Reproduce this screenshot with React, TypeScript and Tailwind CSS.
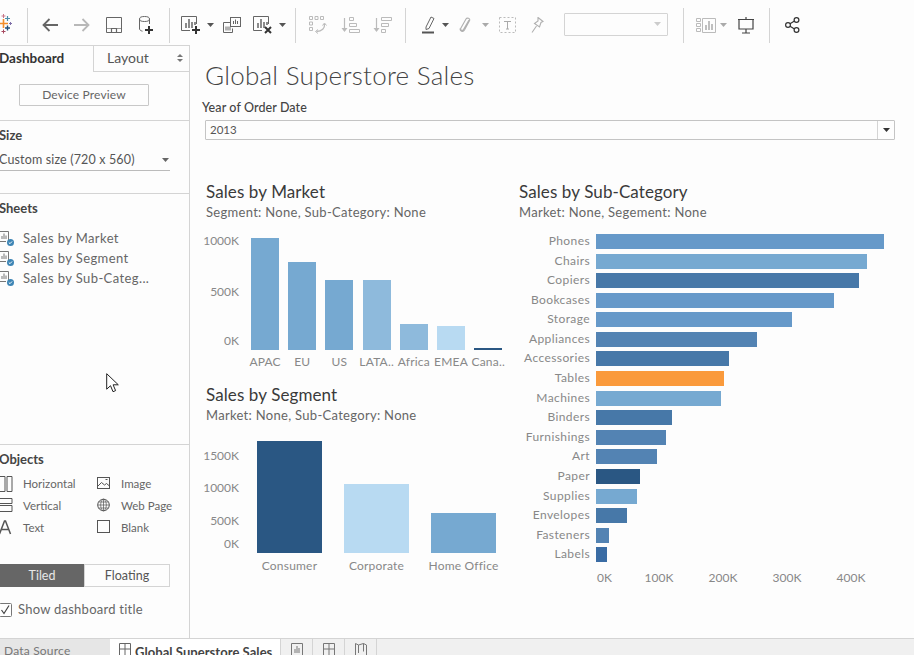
import React from 'react';

const marketBars = [
  { label: 'APAC', h: 112, color: '#76a9d1' },
  { label: 'EU', h: 88, color: '#76a9d1' },
  { label: 'US', h: 70, color: '#76a9d1' },
  { label: 'LATA..', h: 70, color: '#8ebadc' },
  { label: 'Africa', h: 26, color: '#8ebadc' },
  { label: 'EMEA', h: 24, color: '#b8daf2' },
  { label: 'Cana..', h: 2, color: '#2a5783' },
];

const segmentBars = [
  { label: 'Consumer', h: 112, color: '#2a5783' },
  { label: 'Corporate', h: 69, color: '#b8daf2' },
  { label: 'Home Office', h: 40, color: '#76a9d1' },
];

const subCategories = [
  { label: 'Phones', w: 288, color: '#6699c9' },
  { label: 'Chairs', w: 271, color: '#76a9d1' },
  { label: 'Copiers', w: 263, color: '#4778a8' },
  { label: 'Bookcases', w: 238, color: '#6699c9' },
  { label: 'Storage', w: 196, color: '#6699c9' },
  { label: 'Appliances', w: 161, color: '#5383b3' },
  { label: 'Accessories', w: 133, color: '#4778a8' },
  { label: 'Tables', w: 128, color: '#fa9a3c' },
  { label: 'Machines', w: 125, color: '#76a9d1' },
  { label: 'Binders', w: 76, color: '#4778a8' },
  { label: 'Furnishings', w: 70, color: '#5383b3' },
  { label: 'Art', w: 61, color: '#5383b3' },
  { label: 'Paper', w: 44, color: '#2a5783' },
  { label: 'Supplies', w: 41, color: '#76a9d1' },
  { label: 'Envelopes', w: 31, color: '#4778a8' },
  { label: 'Fasteners', w: 13, color: '#5383b3' },
  { label: 'Labels', w: 11, color: '#3a6ca4' },
];

const Sep = ({ ml }: { ml: string }) => <div className={`w-px h-[35px] bg-[#d4d4d4] shrink-0 ${ml}`} />;

const Caret = ({ className, color = '#555' }: { className?: string; color?: string }) => (
  <svg width="7" height="4" viewBox="0 0 7 4" className={`shrink-0 ${className ?? ''}`}>
    <path d="M0 0h7L3.5 4z" fill={color} />
  </svg>
);

const ChartBox = ({ plus, cross }: { plus?: boolean; cross?: boolean }) => (
  <svg width="20" height="20" viewBox="0 0 20 20" fill="none" className="shrink-0">
    <path d="M15.5 9V1.5H.5v14H9" stroke="#666" />
    <path d="M5 13V8M8 13V4M11 13V7M14 10V7" stroke="#666" strokeWidth="1.5" />
    {plus && <path d="M15 11v8M11 15h8" stroke="#333" strokeWidth="2" />}
    {cross && <path d="M12 12l6 6M18 12l-6 6" stroke="#333" strokeWidth="2" />}
  </svg>
);

const Toolbar = () => (
  <div className="flex items-center h-[45px] pt-[5px] shrink-0 overflow-hidden">
    <svg width="13" height="20" viewBox="0 0 13 20" className="shrink-0 -mt-[2px]">
      <path d="M3.500 5v9M-1 9.500h9" stroke="#f28e2b" strokeWidth="1.600" />
      <path d="M7.500 2v5M5 4.500h5" stroke="#4e8fa8" strokeWidth="1.200" />
      <path d="M7.500 11.500v5M5 14h5" stroke="#1f4e79" strokeWidth="1.400" />
      <path d="M3.500 0v4M1.500 2h4" stroke="#c8788a" strokeWidth="1" />
      <path d="M3.500 15.500v4M1.500 17.500h4" stroke="#a6485f" strokeWidth="1" />
      <path d="M10.500 8v3M9 9.500h3" stroke="#7f6fa8" strokeWidth="1" />
    </svg>
    <Sep ml="ml-[14px]" />
    <svg width="16" height="14" viewBox="0 0 16 14" fill="none" className="ml-[14px] shrink-0">
      <path d="M16 7H2M7.500 1L1.500 7l6 6" stroke="#666" strokeWidth="1.800" />
    </svg>
    <svg width="16" height="14" viewBox="0 0 16 14" fill="none" className="ml-[16px] shrink-0">
      <path d="M0 7h14M8.500 1l6 6-6 6" stroke="#b8b8b8" strokeWidth="1.800" />
    </svg>
    <svg width="16" height="16" viewBox="0 0 16 16" fill="none" className="ml-[16px] shrink-0">
      <path d="M.500.500h15v15H.500z" stroke="#666" />
      <path d="M1 11.500h14" stroke="#999" />
      <path d="M5.500 15v-3.500h5V15" stroke="#666" strokeWidth="1.200" />
    </svg>
    <svg width="15" height="19" viewBox="0 0 15 19" fill="none" className="ml-[17px] shrink-0">
      <ellipse cx="5.500" cy="3" rx="5" ry="2.500" stroke="#666" />
      <path d="M.500 3v10c0 1 1.500 1.800 3 2.200M10.500 3v5" stroke="#666" />
      <path d="M10 10v8M6 14h8" stroke="#333" strokeWidth="2" />
    </svg>
    <Sep ml="ml-[15px]" />
    <div className="ml-[11px] shrink-0"><ChartBox plus /></div>
    <Caret className="ml-[6px]" />
    <svg width="18" height="17" viewBox="0 0 18 17" fill="none" className="ml-[9px] shrink-0">
      <path d="M7.500 5.500H.500v10h9v-4" stroke="#666" />
      <rect x="7.500" y=".500" width="10" height="9" fill="#fdfdfd" stroke="#666" />
      <path d="M10.500 7V4M12.500 7V2.500M14.500 7V4M3 13.500v-4M5 13.500v-4M7 13.500v-4" stroke="#666" />
    </svg>
    <div className="ml-[12px] shrink-0"><ChartBox cross /></div>
    <Caret className="ml-[6px]" />
    <Sep ml="ml-[9px]" />
    <svg width="18" height="18" viewBox="0 0 18 18" fill="none" className="ml-[13px] shrink-0">
      <path d="M.500.500h3v3h-3zM6 .500h3v3H6zM11.500.500h3v3h-3zM.500 6h3v3h-3zM.500 11.500h3v3h-3z" stroke="#bbb" />
      <path d="M15.500 8c.5 4-2.500 7.500-8 7.500" stroke="#bbb" strokeWidth="1.300" />
      <path d="M13.500 9.500l2-2.500 2 2.500M9 13.500l-2.500 2 2.500 2" stroke="#bbb" />
    </svg>
    <svg width="19" height="18" viewBox="0 0 19 18" fill="none" className="ml-[14px] shrink-0">
      <path d="M3.500 2v13" stroke="#bbb" strokeWidth="1.200" />
      <path d="M.500 12h6l-3 4z" fill="#bbb" />
      <path d="M8.500 1.500h4v3h-4zM8.500 7.500h7v3h-7zM8.500 13.500h10v3h-10z" stroke="#bbb" />
    </svg>
    <svg width="19" height="18" viewBox="0 0 19 18" fill="none" className="ml-[13px] shrink-0">
      <path d="M3.500 2v13" stroke="#bbb" strokeWidth="1.200" />
      <path d="M.500 12h6l-3 4z" fill="#bbb" />
      <path d="M8.500 1.500h10v3h-10zM8.500 7.500h7v3h-7zM8.500 13.500h4v3h-4z" stroke="#bbb" />
    </svg>
    <Sep ml="ml-[13px]" />
    <svg width="13" height="18" viewBox="0 0 13 18" fill="none" className="ml-[16px] shrink-0">
      <path d="M4 11l5-10 3 1.500-5 10-3 1z" stroke="#666" />
      <path d="M0 16.500h12" stroke="#555" strokeWidth="2" />
    </svg>
    <Caret className="ml-[7px]" />
    <svg width="13" height="16" viewBox="0 0 13 16" fill="none" className="ml-[10px] shrink-0">
      <path d="M10 3L4.500 12.500c-1 1.800-3.500.6-2.700-1.200L7 2c1-1.800 4.500-.5 3.600 1.500L5.500 13c-1.500 2.500-5 1-4.200-1.500" stroke="#b0b0b0" strokeWidth="1.100" />
    </svg>
    <Caret className="ml-[10px]" color="#aaa" />
    <svg width="17" height="16" viewBox="0 0 17 16" fill="none" className="ml-[10px] shrink-0">
      <rect x=".500" y=".500" width="16" height="15" stroke="#bbb" strokeDasharray="2 2" />
      <path d="M5 4.500h7M8.500 4.500v7.500M7 12h3" stroke="#aaa" />
    </svg>
    <svg width="13" height="16" viewBox="0 0 13 16" fill="none" className="ml-[15px] shrink-0">
      <path d="M7 .500l5 4-2 1-1.500 4.500-5-3.500 3.500-2.500zM5.500 9L1 15.500" stroke="#b0b0b0" strokeWidth="1.100" />
    </svg>
    <div className="ml-[20px] w-[104px] h-[23px] -mt-[2px] border border-[#d4d4d4] rounded-[1px] flex items-center justify-end pr-[6px] shrink-0">
      <Caret color="#ccc" />
    </div>
    <Sep ml="ml-[15px]" />
    <svg width="20" height="15" viewBox="0 0 20 15" fill="none" className="ml-[12px] shrink-0">
      <path d="M.500.500h4v3h-4zM.500 5.500h4v3h-4zM.500 10.500h4v3h-4zM6.500.500h13v14h-13z" stroke="#bbb" />
      <path d="M10 12V7M13 12V3M16 12V6" stroke="#aaa" strokeWidth="1.500" />
    </svg>
    <Caret className="ml-[4px]" color="#aaa" />
    <svg width="18" height="17" viewBox="0 0 18 17" fill="none" className="ml-[10px] shrink-0">
      <path d="M1 2.500h16M2 2.500v9.500h14V2.500M9 0v2M9 12v4M5 16h8" stroke="#444" strokeWidth="1.200" />
    </svg>
    <Sep ml="ml-[14px]" />
    <svg width="15" height="16" viewBox="0 0 15 16" fill="none" className="ml-[15px] shrink-0">
      <circle cx="3" cy="8" r="2.400" stroke="#333" strokeWidth="1.200" />
      <circle cx="11.500" cy="3" r="2.400" stroke="#333" strokeWidth="1.200" />
      <circle cx="11.500" cy="13" r="2.400" stroke="#333" strokeWidth="1.200" />
      <path d="M5 6.800l4.500-2.700M5 9.200l4.500 2.700" stroke="#333" strokeWidth="1.200" />
    </svg>
  </div>
);

const SheetIcon = () => (
  <svg width="16" height="16" viewBox="0 0 16 16" fill="none" className="shrink-0 -ml-[1px]">
    <path d="M9.500 9V.500h-9v10H7" stroke="#777" />
    <path d="M3 8V5M5 8V2.500M7 8V4.500" stroke="#777" />
    <circle cx="11.500" cy="11.500" r="3.500" fill="#3d85b5" />
    <path d="M9.800 11.500l1.200 1.200 2-2.200" stroke="#fff" strokeWidth="1" />
  </svg>
);

const objects = [
  {
    label: 'Horizontal',
    icon: <path d="M-1 .500h6v15h-6zM7 .500h5v15H7z" stroke="#555" />,
  },
  {
    label: 'Image',
    icon: (
      <>
        <rect x=".500" y="1.500" width="12" height="11" stroke="#555" />
        <path d="M1 10l3.500-3.500 3 2.500 2-1.500L12.500 10M8.500 3.500h2" stroke="#555" />
      </>
    ),
  },
  { label: 'Vertical', icon: <path d="M-1 .500h13v5H-1zM-1 7.500h13v6H-1z" stroke="#555" /> },
  {
    label: 'Web Page',
    icon: (
      <>
        <circle cx="6.500" cy="7" r="5.800" stroke="#555" />
        <path d="M.700 7h11.600M6.500 1.200v11.600M1.500 4h10M1.500 10h10" stroke="#555" strokeWidth=".700" />
        <ellipse cx="6.500" cy="7" rx="2.800" ry="5.800" stroke="#555" strokeWidth=".700" />
      </>
    ),
  },
  { label: 'Text', icon: <path d="M-.500 14L4.500 1h1l5 13M1.500 9.500h7" stroke="#555" strokeWidth="1.500" /> },
  { label: 'Blank', icon: <rect x=".500" y=".500" width="12" height="12" stroke="#555" /> },
];

const Sidebar = () => (
  <div className="w-[190px] shrink-0 border-t border-r border-[#d4d4d4] flex flex-col text-[#555] overflow-hidden">
    <div className="flex h-[26px] shrink-0">
      <div className="w-[94px] -ml-[1px] leading-[24px] text-[13.500px] font-bold text-[#333]">Dashboard</div>
      <div className="flex-1 border-l border-b border-[#d4d4d4] flex items-center justify-between pl-[13px] pr-[7px] pb-[2px] text-[14px] text-[#555] -mr-px">
        Layout
        <span className="flex flex-col gap-[2px]">
          <span className="w-0 h-0 border-x-[3px] border-x-transparent border-b-[3px] border-b-[#777]" />
          <span className="w-0 h-0 border-x-[3px] border-x-transparent border-t-[3px] border-t-[#777]" />
        </span>
      </div>
    </div>
    <div className="h-[49px] shrink-0 border-b border-[#d4d4d4] pt-[12px] pl-[19px]">
      <div className="w-[130px] h-[22px] border border-[#c8c8c8] flex items-center justify-center text-[12px] tracking-[0.15px] text-[#666] rounded-[1px]">
        Device Preview
      </div>
    </div>
    <div className="h-[73px] shrink-0 border-b border-[#d4d4d4] pt-[5px]">
      <div className="h-[18px] leading-[18px] text-[13px] font-bold text-[#444] -ml-[1px]">Size</div>
      <div className="mt-[6px] h-[21px] w-[171px] border-b border-[#bbb] flex items-center justify-between text-[12.500px] tracking-[0.15px] leading-[20px] -ml-[1px]">
        Custom size (720 x 560)
        <Caret className="mr-[1px]" color="#666" />
      </div>
    </div>
    <div className="h-[251px] shrink-0 border-b border-[#d4d4d4] pt-[5px]">
      <div className="h-[18px] leading-[18px] text-[13px] font-bold text-[#444] -ml-[1px]">Sheets</div>
      <div className="mt-[12px] flex flex-col">
        {['Sales by Market', 'Sales by Segment', 'Sales by Sub-Categ...'].map((s) => (
          <div key={s} className="h-[20px] flex items-center gap-[8px] text-[13px] tracking-[0.4px] text-[#666]">
            <SheetIcon />
            {s}
          </div>
        ))}
      </div>
    </div>
    <div className="flex-1 pt-[5px]">
      <div className="h-[18px] leading-[18px] text-[13px] font-bold text-[#444] -ml-[1px]">Objects</div>
      <div className="mt-[5px] grid grid-cols-[97px_1fr]">
        {objects.map((o) => (
          <div key={o.label} className="h-[22px] flex items-center text-[11.500px] text-[#666]">
            <svg width="13" height="16" viewBox="0 0 13 16" fill="none" className="shrink-0 overflow-visible">
              {o.icon}
            </svg>
            <span className={o.label === 'Image' || o.label === 'Web Page' || o.label === 'Blank' ? 'ml-[11px]' : 'ml-[10px]'}>{o.label}</span>
          </div>
        ))}
      </div>
      <div className="mt-[25px] flex h-[23px] w-[170px] text-[12.500px]">
        <div className="w-[84px] bg-[#666] text-[#e8e8e8] flex items-center justify-center pt-px">Tiled</div>
        <div className="flex-1 border border-[#d4d4d4] flex items-center justify-center text-[#555] pt-px">Floating</div>
      </div>
      <div className="mt-[13px] h-[20px] flex items-center gap-[6px] text-[13px] tracking-[0.25px] text-[#666]">
        <svg width="13" height="14" viewBox="0 0 13 14" fill="none" className="shrink-0 -ml-[1px]">
          <rect x=".500" y=".500" width="12" height="13" rx="1" stroke="#777" fill="#fff" />
          <path d="M2.500 7l2.500 3.500L10 2.500" stroke="#444" strokeWidth="1.200" />
        </svg>
        Show dashboard title
      </div>
    </div>
  </div>
);

const PanelHead = ({ title, sub }: { title: string; sub: string }) => (
  <>
    <div className="h-[18px] leading-[18px] text-[17px] tracking-[0.1px] text-[#3a3a3a] whitespace-nowrap">{title}</div>
    <div className="mt-[4px] h-[15px] leading-[15px] text-[13px] tracking-[0.3px] text-[#666] whitespace-nowrap">{sub}</div>
  </>
);

const Main = () => (
  <div className="flex-1 min-w-0 flex flex-col">
    <div className="mt-[15px] ml-[15px] h-[30px] leading-[30px] text-[26px] tracking-[0.25px] font-light text-[#444]">Global Superstore Sales</div>
    <div className="mt-[10px] ml-[12px] h-[15px] leading-[15px] text-[12.500px] tracking-[0.1px] font-medium text-[#444]">Year of Order Date</div>
    <div className="mt-[5px] ml-[15px] w-[690px] h-[20px] border border-[#c4c4c4] rounded-[1px] flex items-center justify-between text-[11.500px] text-[#555]">
      <span className="pl-[4px]">2013</span>
      <span className="w-[17px] h-full border-l border-[#d4d4d4] flex items-center justify-center">
        <Caret color="#333" />
      </span>
    </div>
    <div className="mt-[43px] flex">
      <div className="w-[313px] ml-[16px] shrink-0">
        <PanelHead title="Sales by Market" sub="Segment: None, Sub-Category: None" />
        <div className="mt-[14px] h-[116px] flex text-[12px] text-[#888]">
          <div className="w-[33px] flex flex-col items-end leading-[14px]">
            <span>1000K</span>
            <span className="mt-[37px]">500K</span>
            <span className="mt-[35px]">0K</span>
          </div>
          <div className="ml-[12px] flex items-end">
            {marketBars.map((b) => (
              <div key={b.label} className="w-[37.200px]">
                <div className="w-[28px]" style={{ height: b.h, backgroundColor: b.color }} />
              </div>
            ))}
          </div>
        </div>
        <div className="mt-[5px] ml-[45px] flex text-[12px] tracking-[0.2px] leading-[14px] text-[#888]">
          {marketBars.map((b) => (
            <div key={b.label} className="w-[37.200px] flex justify-center pr-[9px]">
              <span className="whitespace-nowrap">{b.label}</span>
            </div>
          ))}
        </div>
        <div className="mt-[17px]">
          <PanelHead title="Sales by Segment" sub="Market: None, Sub-Category: None" />
        </div>
        <div className="mt-[18px] h-[112px] flex text-[12px] text-[#888]">
          <div className="w-[33px] flex flex-col items-end leading-[14px] pt-[8px]">
            <span>1500K</span>
            <span className="mt-[18px]">1000K</span>
            <span className="mt-[19px]">500K</span>
            <span className="mt-[9px]">0K</span>
          </div>
          <div className="ml-[18px] flex items-end gap-[22px]">
            {segmentBars.map((b) => (
              <div key={b.label} className="w-[65px]" style={{ height: b.h, backgroundColor: b.color }} />
            ))}
          </div>
        </div>
        <div className="mt-[6px] ml-[40px] flex text-[12px] tracking-[0.2px] leading-[14px] text-[#888]">
          {segmentBars.map((b) => (
            <div key={b.label} className="w-[87px] flex justify-center">
              <span className="whitespace-nowrap">{b.label}</span>
            </div>
          ))}
        </div>
      </div>
      <div className="flex-1 min-w-0">
        <PanelHead title="Sales by Sub-Category" sub="Market: None, Segement: None" />
        <div className="mt-[14px] flex flex-col">
          {subCategories.map((c) => (
            <div key={c.label} className="h-[19.580px] flex items-start">
              <div className="w-[71px] -mt-px text-right text-[12px] tracking-[0.4px] leading-[15px] text-[#888] whitespace-nowrap">{c.label}</div>
              <div className="ml-[6px] h-[15px]" style={{ width: c.w, backgroundColor: c.color }} />
            </div>
          ))}
        </div>
        <div className="mt-[4px] ml-[77px] flex text-[12px] leading-[14px] text-[#888]">
          <span className="w-[31px] pl-[1px]">0K</span>
          {['100K', '200K', '300K', '400K'].map((t) => (
            <span key={t} className="w-[64px] text-center">{t}</span>
          ))}
        </div>
      </div>
    </div>
  </div>
);

const TabBar = () => (
  <div className="h-[17px] shrink-0 border-t border-[#d4d4d4] bg-[#f0f0f0] flex overflow-hidden text-[13px]">
    <div className="w-[110px] bg-[#e6e6e6] pl-[4px] leading-[24px] text-[12px] tracking-[0.2px] text-[#777]">Data Source</div>
    <div className="w-[171px] bg-white border-r border-[#d4d4d4] flex pl-[9px] gap-[4px] pt-[3px]">
      <svg width="12" height="14" viewBox="0 0 12 14" fill="none" className="shrink-0">
        <path d="M.500 1.500h11v12h-11zM6 1.500v12M.500 7h11" stroke="#666" />
      </svg>
      <span className="font-bold text-[#444] leading-[20px] text-[13px] tracking-[0.05px] whitespace-nowrap">Global Superstore Sales</span>
    </div>
    {[0, 1, 2].map((i) => (
      <div key={i} className="w-[32px] border-r border-[#d4d4d4] flex justify-center pt-[3px]">
        <svg width="12" height="14" viewBox="0 0 12 14" fill="none">
          {i === 0 && <path d="M.500 13V1.500h11V13M4 11V7M6 11V4M8 11V6" stroke="#777" />}
          {i === 1 && <path d="M.500 1.500h11v12h-11zM6 1.500v12M.500 7h11" stroke="#777" />}
          {i === 2 && <path d="M.500 1.500l3 1.500 5-1.500 3 1.500V13M.500 1.500V13M3.500 3v8M8.500 1.500v8" stroke="#777" />}
        </svg>
      </div>
    ))}
  </div>
);

export default function App() {
  return (
    <div className="relative w-[914px] h-[655px] overflow-hidden flex flex-col bg-[#fdfdfd] font-['Lato','Liberation_Sans',sans-serif]">
      <Toolbar />
      <div className="flex-1 min-h-0 flex">
        <Sidebar />
        <Main />
      </div>
      <TabBar />
      {/* mouse pointer over the page */}
      <svg width="14" height="20" viewBox="0 0 14 20" className="absolute left-[106px] top-[373px]">
        <path d="M.700.700v15.500l3.800-3.500 2.500 6 2.600-1.100-2.500-5.800h5.200z" fill="#fff" stroke="#222" strokeWidth="1" />
      </svg>
    </div>
  );
}
